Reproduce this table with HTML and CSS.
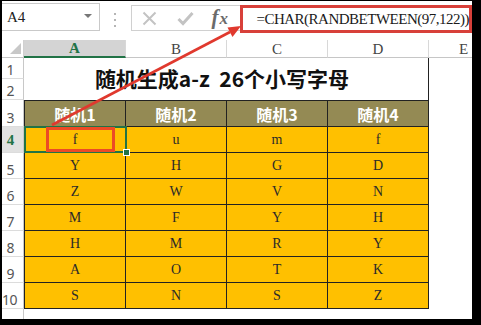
FILE: index.html
```html
<!DOCTYPE html>
<html>
<head>
<meta charset="utf-8">
<link rel="stylesheet" href="styles.css">
</head>
<body>
<div class="app">
  <div class="fbar">
    <div class="namebox"><span class="nb-text">A4</span><span class="nb-arrow"></span></div>
    <div class="dots"><i></i><i></i><i></i></div>
    <div class="fxtools">
      <svg class="ic-x" width="15" height="15" viewBox="0 0 15 15"><path d="M1.5 1.5L13.5 13.5M13.5 1.5L1.5 13.5" stroke="#c3c3c3" stroke-width="2" fill="none"/></svg>
      <svg class="ic-check" width="17" height="15" viewBox="0 0 17 15"><path d="M1.5 8L6 12.5L15.5 2" stroke="#c3c3c3" stroke-width="3" fill="none"/></svg>
      <span class="fx">f<span class="fx-x">x</span></span>
    </div>
    <div class="formula">=CHAR(RANDBETWEEN(97,122))</div>
  </div>
  <div class="sheet">
    <div class="corner"><span class="tri"></span></div>
    <div class="ch sel-col">A</div>
    <div class="ch">B</div>
    <div class="ch">C</div>
    <div class="ch">D</div>
    <div class="ch ch-e">E</div>

    <div class="rh">1</div>
    <div class="title">随机生成a-z  26个小写字母</div>
    <div class="e"></div>
    <div class="rh">2</div>
    <div class="e"></div>

    <div class="rh">3</div>
    <div class="hd col-a">随机1</div>
    <div class="hd">随机2</div>
    <div class="hd">随机3</div>
    <div class="hd">随机4</div>
    <div class="e"></div>

    <div class="rh rh-sel">4</div>
    <div class="c col-a sel">f<span class="mark"></span></div>
    <div class="c">u</div>
    <div class="c">m</div>
    <div class="c">f</div>
    <div class="e"></div>

    <div class="rh">5</div>
    <div class="c col-a">Y</div><div class="c">H</div><div class="c">G</div><div class="c">D</div><div class="e"></div>
    <div class="rh">6</div>
    <div class="c col-a">Z</div><div class="c">W</div><div class="c">V</div><div class="c">N</div><div class="e"></div>
    <div class="rh">7</div>
    <div class="c col-a">M</div><div class="c">F</div><div class="c">Y</div><div class="c">H</div><div class="e"></div>
    <div class="rh">8</div>
    <div class="c col-a">H</div><div class="c">M</div><div class="c">R</div><div class="c">Y</div><div class="e"></div>
    <div class="rh">9</div>
    <div class="c col-a">A</div><div class="c">O</div><div class="c">T</div><div class="c">K</div><div class="e"></div>
    <div class="rh rh-10">10</div>
    <div class="c col-a">S</div><div class="c">N</div><div class="c">S</div><div class="c">Z</div><div class="e"></div>

    <div class="rh rh-last"></div>
  </div>
</div>
<svg class="arrow" width="481" height="325" viewBox="0 0 481 325">
  <line x1="52" y1="125" x2="230" y2="32" stroke="#e0392e" stroke-width="2.6"/>
  <polygon points="241,26 227.5,27.5 232.5,37" fill="#e0392e"/>
</svg>
</body>
</html>
```
FILE: styles.css
```css
html, body {
  margin: 0;
  padding: 0;
}
body {
  background: #000;
  width: 481px;
  height: 325px;
  overflow: hidden;
  position: relative;
  padding: 1px 0 0 2px;
  box-sizing: border-box;
}
.app {
  width: 470px;
  height: 318px;
  background: #fff;
  display: flex;
  flex-direction: column;
}

/* formula bar */
.fbar {
  height: 39px;
  display: flex;
  align-items: flex-start;
  flex: none;
}
.namebox {
  box-sizing: border-box;
  width: 100px;
  height: 28px;
  margin-top: 2px;
  border: 1px solid #c9c9c9;
  border-left: none;
  display: flex;
  align-items: center;
  justify-content: space-between;
  padding: 0 7px 0 5px;
}
.nb-text {
  font-family: "Liberation Serif", serif;
  font-size: 15px;
  color: #222;
  margin-top: 1px;
}
.nb-arrow {
  width: 0;
  height: 0;
  border-left: 4px solid transparent;
  border-right: 4px solid transparent;
  border-top: 4px solid #777;
  margin-top: -3px;
}
.dots {
  width: 31px;
  display: flex;
  flex-direction: column;
  align-items: center;
  gap: 4px;
  margin-top: 12px;
}
.dots i {
  display: block;
  width: 2px;
  height: 2px;
  background: #b5b5b5;
}
.fxtools {
  box-sizing: border-box;
  width: 112px;
  height: 26px;
  margin-top: 4px;
  border: 1px solid #d0d0d0;
  border-right: none;
  display: flex;
  align-items: center;
  padding-left: 10px;
}
.ic-x { margin-right: 20px; }
.ic-check { margin-right: 18px; }
.fx {
  font-family: "Liberation Serif", serif;
  font-style: italic;
  font-weight: bold;
  font-size: 21px;
  color: #6b6b6b;
  line-height: 1;
  margin-top: -2px;
}
.fx-x {
  font-size: 17px;
  margin-left: 1px;
}
.formula {
  box-sizing: border-box;
  flex: 1;
  height: 28px;
  margin-top: 4px;
  border: 3px solid #d8403a;
  font-family: "Liberation Serif", serif;
  font-size: 15px;
  letter-spacing: -0.5px;
  color: #1a1a1a;
  display: flex;
  align-items: center;
  padding-left: 13px;
  white-space: nowrap;
}

/* sheet */
.sheet {
  flex: 1;
  display: grid;
  grid-template-columns: 22px 102px 101px 101px 101px 1fr;
  grid-template-rows: 18px 21px 21px 27px repeat(7, 26px) 1fr;
}
.sheet > div {
  box-sizing: border-box;
}
.corner {
  border-right: 1px solid #d0d0d0;
  border-bottom: 1px solid #c6c6c6;
  position: relative;
}
.tri {
  position: absolute;
  right: 2px;
  bottom: 3px;
  width: 0;
  height: 0;
  border-left: 11px solid transparent;
  border-bottom: 11px solid #c8c8c8;
}
.ch {
  border-right: 1px solid #d8d8d8;
  border-bottom: 1px solid #c6c6c6;
  font-family: "Liberation Serif", serif;
  font-size: 15px;
  color: #444;
  display: flex;
  align-items: center;
  justify-content: center;
  padding-top: 1px;
}
.ch-e {
  border-right: none;
  justify-content: flex-start;
  padding-left: 30px;
}
.sel-col {
  background: #d4d4d4;
  color: #217346;
  font-weight: bold;
  border-bottom: 2px solid #217346;
}
.rh {
  border-right: 1px solid #c8c8c8;
  border-bottom: 1px solid #dcdcdc;
  font-family: "Noto Sans", sans-serif;
  font-size: 14px;
  color: #555;
  display: flex;
  align-items: flex-end;
  justify-content: center;
  padding: 0 4px 1px 0;
  line-height: 1;
}
.rh-10 {
  justify-content: flex-start;
  padding-left: 0;
  letter-spacing: -0.5px;
}
.rh-sel {
  background: #e1e1e1;
  color: #217346;
  font-family: "Liberation Serif", serif;
  font-weight: bold;
  font-size: 15px;
  padding-bottom: 4px;
}
.rh-last {
  border-bottom: none;
}
.title {
  grid-column: span 4;
  grid-row: span 2;
  border-right: 1px solid #222;
  display: flex;
  align-items: center;
  justify-content: center;
  font-family: "Noto Sans CJK SC", sans-serif;
  font-weight: bold;
  font-size: 21px;
  color: #111;
  white-space: pre;
  padding: 0 8px 2px 0;
}
.hd {
  background: #948a54;
  border-top: 1px solid #222;
  border-right: 1px solid #222;
  border-bottom: 1px solid #222;
  color: #fff;
  font-family: "Noto Sans CJK SC", sans-serif;
  font-weight: bold;
  font-size: 16px;
  display: flex;
  align-items: center;
  justify-content: center;
}
.c {
  background: #ffc000;
  border-right: 1px solid #222;
  border-bottom: 1px solid #222;
  font-family: "Liberation Serif", serif;
  font-size: 14px;
  color: #2a2a2a;
  display: flex;
  align-items: center;
  justify-content: center;
}
.col-a {
  border-left: 1px solid #222;
}
.sel {
  position: relative;
}
.sel::before {
  content: "";
  position: absolute;
  left: -1px;
  top: -1px;
  right: -2px;
  bottom: -1px;
  border: 2px solid #217346;
  z-index: 2;
}
.sel::after {
  content: "";
  position: absolute;
  right: -5px;
  bottom: -4px;
  width: 5px;
  height: 5px;
  background: #217346;
  border: 1px solid #fff;
  z-index: 3;
}
.mark {
  position: absolute;
  left: 21px;
  top: 0;
  width: 69px;
  height: 25px;
  box-sizing: border-box;
  border: 3px solid #ec4a26;
  z-index: 4;
}
.e {
  background: #fff;
}

.arrow {
  position: absolute;
  left: 0;
  top: 0;
  pointer-events: none;
  z-index: 10;
}
```
